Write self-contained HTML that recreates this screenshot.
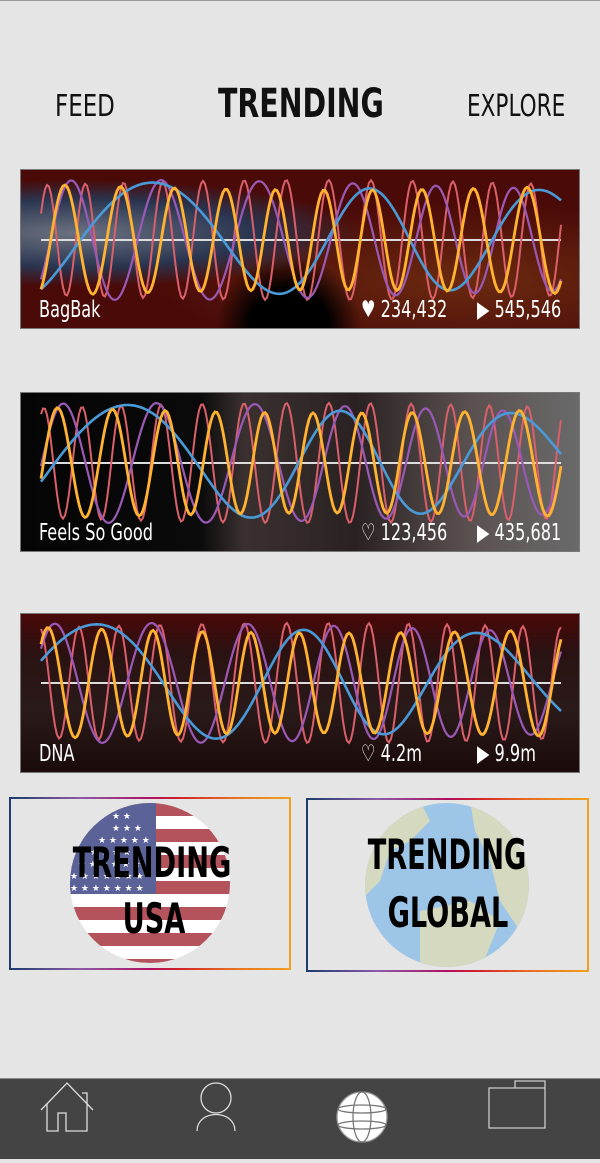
<!DOCTYPE html>
<html><head><meta charset="utf-8">
<style>
*{margin:0;padding:0;box-sizing:border-box}
body{width:600px;height:1158px;background:#e5e5e5;position:relative;overflow:hidden;font-family:"DejaVu Sans Condensed","Liberation Sans",sans-serif;border-top:1px solid #999}
.t{position:absolute;color:#111;white-space:nowrap}
.card{position:absolute;left:20px;width:560px;height:160px;overflow:hidden;border:1px solid #777}
.card svg{position:absolute;left:0;top:0}
.lab{position:absolute;color:#fff;font-size:23px;white-space:nowrap;transform:scaleX(.78);transform-origin:left}
.box{position:absolute}
</style></head><body>
<div class="t" style="left:55px;top:88px;font-size:30px;font-weight:300;transform:scaleX(.85);transform-origin:left">FEED</div>
<div class="t" style="left:218px;top:80px;font-size:40px;font-weight:bold;transform:scaleX(.79);transform-origin:left">TRENDING</div>
<div class="t" style="left:467px;top:88px;font-size:30px;transform:scaleX(.8);transform-origin:left">EXPLORE</div>

<div class="card" style="top:168px;background:radial-gradient(ellipse at 10% 40%,#6b7280 0,#2a3550 25%,transparent 40%),radial-gradient(circle at 48% 100%,#000 0,#000 12%,transparent 22%),radial-gradient(ellipse at 80% 70%,#6b2a10 0,transparent 50%),#4a0a08"><svg id="s1" width="560" height="160"></svg>
<div class="lab" style="left:18px;top:127px">BagBak</div>
<div class="lab" style="left:340px;top:127px">♥ 234,432</div>
<div class="lab" style="left:456px;top:127px">▶ 545,546</div></div>

<div class="card" style="top:391px;background:linear-gradient(90deg,#050505 0,#0a0a0a 32%,#3a3030 40%,#2a2222 60%,#5a5050 80%,#6a6a6a 100%)"><svg id="s2" width="560" height="160"></svg>
<div class="lab" style="left:18px;top:127px">Feels So Good</div>
<div class="lab" style="left:340px;top:127px">♡ 123,456</div>
<div class="lab" style="left:456px;top:127px">▶ 435,681</div></div>

<div class="card" style="top:612px;background:linear-gradient(180deg,#4a0808 0,#2a1212 25%,#2a1a1a 60%,#1a0a0a 100%)"><svg id="s3" width="560" height="160"></svg>
<div class="lab" style="left:18px;top:127px">DNA</div>
<div class="lab" style="left:340px;top:127px">♡ 4.2m</div>
<div class="lab" style="left:456px;top:127px">▶ 9.9m</div></div>

<svg class="box" style="left:0;top:790px" width="600" height="190">
<defs><linearGradient id="g" x1="0" x2="1"><stop offset="0" stop-color="#1d3c6b"/><stop offset=".25" stop-color="#8a5aa8"/><stop offset=".5" stop-color="#b01060"/><stop offset=".6" stop-color="#d0202a"/><stop offset=".8" stop-color="#e87020"/><stop offset="1" stop-color="#f0a020"/></linearGradient>
<clipPath id="c1"><circle cx="150" cy="92" r="80"/></clipPath><clipPath id="c2"><circle cx="447" cy="94" r="82"/></clipPath></defs>
<rect x="10" y="7" width="280" height="171" fill="none" stroke="url(#g)" stroke-width="2"/>
<rect x="307" y="8" width="281" height="172" fill="none" stroke="url(#g)" stroke-width="2"/>
<g clip-path="url(#c1)">
<rect x="60" y="10" width="180" height="170" fill="#fff"/>
<g fill="#b4535c"><rect x="60" y="12" width="180" height="13"/><rect x="60" y="38" width="180" height="13"/><rect x="60" y="64" width="180" height="13"/><rect x="60" y="90" width="180" height="13"/><rect x="60" y="116" width="180" height="13"/><rect x="60" y="142" width="180" height="13"/><rect x="60" y="168" width="180" height="13"/></g>
<rect x="60" y="10" width="96" height="93" fill="#5a6298"/>
<g fill="#fff" font-size="9" font-family="DejaVu Sans"><text x="112" y="40">★ ★ ★</text><text x="98" y="52">★ ★ ★ ★ ★</text><text x="90" y="64">★ ★ ★ ★ ★</text><text x="78" y="76">★ ★ ★ ★ ★ ★</text><text x="70" y="88">★ ★ ★ ★ ★ ★ ★</text><text x="70" y="100">★ ★ ★ ★ ★ ★ ★</text><text x="112" y="28">★ ★</text></g>
</g>
<g clip-path="url(#c2)">
<rect x="360" y="10" width="180" height="170" fill="#9cc5e8"/>
<path d="M360 10 L420 10 L430 30 L410 50 L390 60 L380 90 L360 110Z" fill="#d4d9bf"/>
<path d="M470 10 L540 10 L540 110 L520 140 L500 110 L490 70 L475 40Z" fill="#d4d9bf"/>
<path d="M420 120 L470 110 L500 130 L480 180 L420 180Z" fill="#d4d9bf"/>
</g>
<g font-family="DejaVu Sans Condensed" font-weight="bold" font-size="42" fill="#000" text-anchor="middle">
<text x="152" y="86" transform="translate(152 0) scale(.72 1) translate(-152 0)">TRENDING</text>
<text x="154" y="142" transform="translate(154 0) scale(.72 1) translate(-154 0)">USA</text>
<text x="447" y="78" transform="translate(447 0) scale(.72 1) translate(-447 0)">TRENDING</text>
<text x="448" y="136" transform="translate(448 0) scale(.72 1) translate(-448 0)">GLOBAL</text>
</g></svg>

<div style="position:absolute;left:0;top:1077px;width:600px;height:81px;background:#444;border-top:1px solid #888">
<svg width="600" height="80" fill="none" stroke="#ddd" stroke-width="1.3">
<path d="M41 31 L67 4 L93 31 M87 25 V14 H82 M47 25 V52 H58 V34 H66 V52 H87 V25"/>
<ellipse cx="216" cy="19" rx="15" ry="15"/><path d="M197 52 C197 30 235 30 235 52"/>
<circle cx="362" cy="38" r="25" fill="#fff" stroke="#999"/><ellipse cx="362" cy="38" rx="9" ry="25" stroke="#777"/><ellipse cx="362" cy="30" rx="24" ry="4" stroke="#777"/><ellipse cx="362" cy="46" rx="24" ry="4" stroke="#777"/>
<path d="M489 9 H545 V49 H489Z M515 9 V2 H545 V9" stroke="#ccc"/>
</svg></div>

<script>
function draw(id,seed,cy){
 var s=document.getElementById(id),ns="http://www.w3.org/2000/svg";
 var defs=[["#d9606a",2,13,0.5],["#9b59b6",2.2,6,-1.4],["#4a9ad8",2.6,2.5,-1.7],["#ffb330",2.8,10,-1.2]];
 var ln=document.createElementNS(ns,"line");ln.setAttribute("x1",20);ln.setAttribute("x2",540);ln.setAttribute("y1",cy);ln.setAttribute("y2",cy);ln.setAttribute("stroke","#ddd");ln.setAttribute("stroke-width","2");s.appendChild(ln);
 defs.forEach(function(d,i){
  var p="",ph=d[3]+seed*(i+1)*0.7;
  for(var x=0;x<=520;x+=2){var t=x/520;var a=2*Math.PI*d[2]*t+ph+0.8*Math.sin(6*t+seed+i);
   var y=cy-(55+5*Math.sin(3*t+i))*Math.sin(a);p+=(x?"L":"M")+(20+x)+" "+y.toFixed(1);}
  var e=document.createElementNS(ns,"path");e.setAttribute("d",p);e.setAttribute("fill","none");e.setAttribute("stroke",d[0]);e.setAttribute("stroke-width",d[1]);s.appendChild(e);
 });
}
draw("s1",0.0,70);draw("s2",0.4,70);draw("s3",0.9,69);
</script>
</body></html>
